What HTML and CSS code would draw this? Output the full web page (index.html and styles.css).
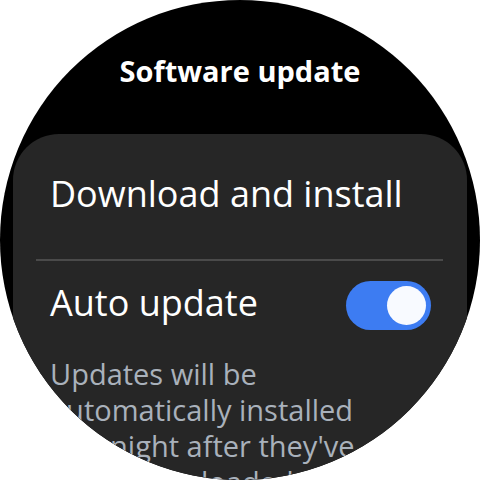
FILE: index.html
```html
<!DOCTYPE html>
<html lang="en">
<head>
    <meta charset="UTF-8">
    <meta name="viewport" content="width=device-width, initial-scale=1.0">
    <title>Software update</title>
    <link rel="stylesheet" href="styles.css">
</head>
<body>

    <!-- Watch face -->
    <div class="watch">
        <h1 class="title">Software update</h1>

        <!-- Settings card -->
        <section class="card">
            <div class="row">Download and install</div>
            <div class="divider"></div>
            <div class="row toggle-row">
                <span>Auto update</span>
                <div class="switch on"><div class="knob"></div></div>
            </div>
            <p class="note">Updates will be automatically installed overnight after they've been downloaded.</p>
        </section>
    </div>

</body>
</html>
```

FILE: styles.css
```css
/* General Styles */
body {
    margin: 0;
    padding: 0;
    background-color: #fff;
    font-family: "Open Sans", Roboto, sans-serif;
}

/* Round screen */
.watch {
    width: 480px;
    height: 480px;
    border-radius: 50%;
    overflow: hidden;
    background-color: #000;
    color: #fff;
}

.title {
    margin: 0;
    padding-top: 54px;
    height: 134px;
    box-sizing: border-box;
    font-size: 29px;
    font-weight: bold;
    text-align: center;
    line-height: 34px;
}

/* Card */
.card {
    margin: 0 13px;
    background-color: #262626;
    border-radius: 46px;
    padding-top: 34px;
    height: 400px;
}

.row {
    padding: 0 37px;
    font-size: 36px;
    line-height: 52px;
}

.divider {
    height: 2px;
    background-color: #4a4a4a;
    margin: 39px 24px 15px 23px;
}

.toggle-row {
    display: flex;
    align-items: center;
    justify-content: space-between;
    padding-right: 36px;
}

/* Toggle switch */
.switch {
    width: 85px;
    height: 49px;
    margin-top: 5px;
    border-radius: 25px;
    background-color: #3d7cf2;
    display: flex;
    align-items: center;
    justify-content: flex-end;
    padding: 0 5px;
    box-sizing: border-box;
}

.knob {
    width: 39px;
    height: 39px;
    border-radius: 50%;
    background-color: #f8faff;
}

.note {
    margin: 26px 0 0;
    padding: 0 37px;
    width: 320px;
    font-size: 29px;
    line-height: 36px;
    color: #a9b1bb;
}
```
